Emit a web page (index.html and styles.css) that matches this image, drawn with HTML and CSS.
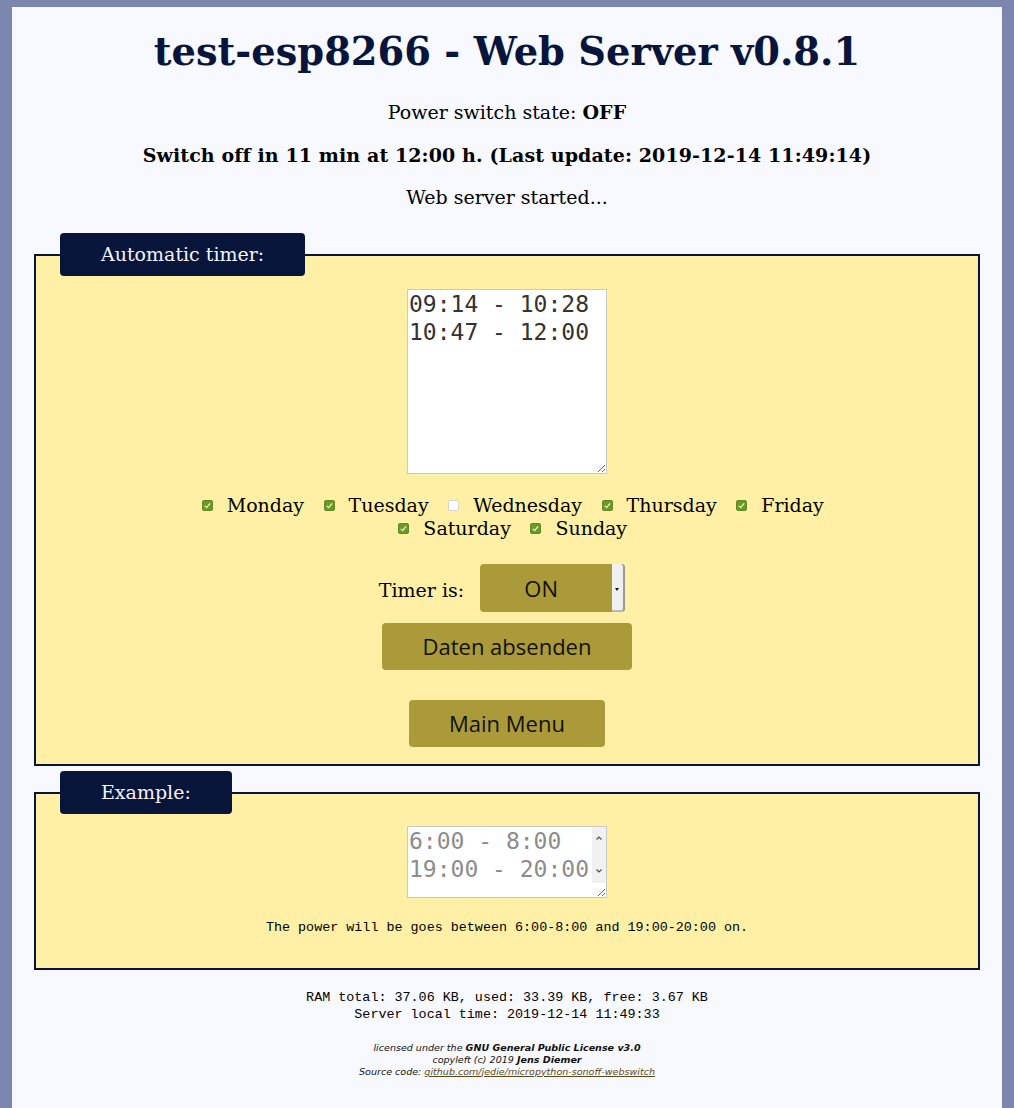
FILE: index.html
```html
<!DOCTYPE html>
<html lang="en">
<head>
<meta charset="utf-8">
<title>test-esp8266 - Web Server v0.8.1</title>
<link rel="stylesheet" href="styles.css">
</head>
<body>
<div class="page">
  <h1 class="title">test-esp8266 - Web Server v0.8.1</h1>
  <p class="status first">Power switch state: <strong>OFF</strong></p>
  <p class="status"><strong>Switch off in 11 min at 12:00 h. (Last update: 2019-12-14 11:49:14)</strong></p>
  <p class="status">Web server started...</p>

  <fieldset class="box">
    <legend class="box-legend">Automatic timer:</legend>
    <div class="box-body">
      <textarea class="times times-main" spellcheck="false">09:14 - 10:28
10:47 - 12:00</textarea>
      <div class="days">
        <div class="day-row">
          <label class="day"><input class="check" type="checkbox" checked>Monday</label>
          <label class="day"><input class="check" type="checkbox" checked>Tuesday</label>
          <label class="day"><input class="check" type="checkbox">Wednesday</label>
          <label class="day"><input class="check" type="checkbox" checked>Thursday</label>
          <label class="day"><input class="check" type="checkbox" checked>Friday</label>
        </div>
        <div class="day-row">
          <label class="day"><input class="check" type="checkbox" checked>Saturday</label>
          <label class="day"><input class="check" type="checkbox" checked>Sunday</label>
        </div>
      </div>
      <div class="timer-row">
        <span class="timer-label">Timer is:</span>
        <span class="select-wrap">
          <select class="select">
            <option>ON</option>
            <option>OFF</option>
          </select>
          <span class="select-arrow"></span>
        </span>
      </div>
      <button class="btn btn-submit" type="button">Daten absenden</button>
      <button class="btn btn-menu" type="button">Main Menu</button>
    </div>
  </fieldset>

  <fieldset class="box box-example">
    <legend class="box-legend">Example:</legend>
    <div class="box-body">
      <div class="ta-wrap">
        <textarea class="times times-example" readonly spellcheck="false">6:00 - 8:00
19:00 - 20:00</textarea>
        <span class="fake-scroll">
          <svg class="scroll-arrow" width="14" height="10" viewBox="0 0 14 10"><path d="M4.5 6.5 L7 4 L9.5 6.5" fill="none" stroke="#505050" stroke-width="1.2"/></svg>
          <svg class="scroll-arrow" width="14" height="10" viewBox="0 0 14 10"><path d="M4.5 3.5 L7 6 L9.5 3.5" fill="none" stroke="#505050" stroke-width="1.2"/></svg>
        </span>
      </div>
      <p class="example-text">The power will be goes between 6:00-8:00 and 19:00-20:00 on.</p>
    </div>
  </fieldset>

  <div class="footer">
    <div class="mem">RAM total: 37.06 KB, used: 33.39 KB, free: 3.67 KB<br>Server local time: 2019-12-14 11:49:33</div>
    <div class="license">licensed under the <strong>GNU General Public License v3.0</strong><br>copyleft (c) 2019 <strong>Jens Diemer</strong><br>Source code: <a class="src-link" href="#">github.com/jedie/micropython-sonoff-webswitch</a></div>
  </div>
</div>
</body>
</html>
```

FILE: styles.css
```css
html, body {
  margin: 0;
}

body {
  background: #7a86ae;
  padding: 7px 12px 0;
  font-family: "DejaVu Serif", serif;
  font-size: 19px;
  color: #000;
}

.page {
  background: #f8f9ff;
  min-height: 1140px;
  padding: 24px 22px 20px;
}

.title {
  margin: 0;
  font-size: 38.4px;
  line-height: 42px;
  font-weight: bold;
  text-align: center;
  color: #061539;
}

.status {
  margin: 18.5px 0 0;
  line-height: 24px;
  text-align: center;
}

.status.first {
  margin-top: 27px;
}

.status strong {
  letter-spacing: 0.1px;
}

.box {
  margin: 24px 0 0;
  border: 2px solid #061539;
  background: #fff0a5;
  padding: 13px 24px 17px;
  min-width: 0;
}

.box-example {
  margin-top: 5px;
  padding-top: 12px;
  padding-bottom: 32px;
}

.box-legend {
  background: #061539;
  color: #f4f4ff;
  border-radius: 4px;
  padding: 10px 41px 11px;
  line-height: 22px;
  font-size: 19px;
}

.box-body {
  display: flex;
  flex-direction: column;
  align-items: center;
}

.times {
  display: block;
  box-sizing: border-box;
  width: 200px;
  margin: 0;
  border: 1px solid #c9c9c9;
  background: #fff;
  padding: 0 1px 1px;
  font-family: "DejaVu Sans Mono", monospace;
  font-size: 23px;
  line-height: 28px;
  color: #333;
  resize: both;
  outline: none;
}

.times-main {
  height: 185px;
  overflow: auto;
}

.ta-wrap {
  position: relative;
  width: 200px;
  height: 72px;
}

.times-example {
  height: 72px;
  color: #8c8c8c;
  overflow: hidden;
  white-space: pre;
}

.fake-scroll {
  position: absolute;
  top: 1px;
  right: 1px;
  width: 14px;
  height: 56px;
  background: #f1f1f1;
  display: flex;
  flex-direction: column;
  justify-content: space-between;
  padding: 6px 0 7px;
  box-sizing: border-box;
}

.scroll-arrow {
  display: block;
}

.days {
  margin-top: 20px;
  display: flex;
  flex-direction: column;
  align-items: center;
}

.day-row {
  display: flex;
  justify-content: center;
  line-height: 23px;
}

.day {
  display: inline-flex;
  align-items: center;
  margin: 0 4px 0 15.5px;
}

.check {
  appearance: none;
  -webkit-appearance: none;
  box-sizing: border-box;
  width: 11px;
  height: 11px;
  margin: 0 14px 0 0;
  border: 1px solid #d3d3d3;
  border-radius: 2px;
  background: #fff;
  position: relative;
}

.check:checked {
  background: #6d9a26;
  border-color: #5f8a1f;
}

.check:checked::after {
  content: "";
  position: absolute;
  left: 3px;
  top: 1px;
  width: 2px;
  height: 5px;
  border: solid #fff;
  border-width: 0 1.5px 1.5px 0;
  transform: rotate(40deg);
}

.timer-row {
  margin-top: 24px;
  display: flex;
  align-items: center;
}

.timer-label {
  margin-right: 16px;
  padding-top: 3px;
}

.select-wrap {
  position: relative;
  display: inline-block;
  width: 145px;
  height: 48px;
  margin-right: 10px;
}

.select {
  appearance: none;
  -webkit-appearance: none;
  display: block;
  width: 145px;
  height: 48px;
  margin: 0;
  border: none;
  border-radius: 4px;
  background: #ab9a3a;
  padding: 0 23px 0 0;
  font-family: "Open Sans", sans-serif;
  font-size: 22px;
  color: #111;
  text-align: center;
  text-align-last: center;
}

.select-arrow {
  position: absolute;
  right: 0;
  top: 0;
  width: 11px;
  height: 46px;
  background: #f0f0f0;
  border-right: 2px solid #9a9a9a;
  border-bottom: 2px solid #b8b8b8;
  border-radius: 0 4px 4px 0;
}

.select-arrow::after {
  content: "";
  position: absolute;
  left: 3px;
  top: 24px;
  border-left: 2.5px solid transparent;
  border-right: 2.5px solid transparent;
  border-top: 3px solid #111;
}

.btn {
  display: block;
  height: 47px;
  margin: 0;
  padding: 0 40px 2px;
  border: none;
  border-radius: 4px;
  background: #ab9a3a;
  font-family: "Open Sans", sans-serif;
  font-size: 22px;
  color: #111;
}

.btn-submit {
  margin-top: 11px;
  padding: 0 41px 2px;
}

.btn-menu {
  margin-top: 30px;
}

.example-text {
  margin: 22px 0 0;
  font-family: "Liberation Mono", monospace;
  font-size: 13.4px;
  line-height: 16px;
  text-align: center;
}

.footer {
  text-align: center;
}

.mem {
  margin-top: 19px;
  font-family: "Liberation Mono", monospace;
  font-size: 13.4px;
  line-height: 17px;
}

.license {
  margin-top: 18.5px;
  font-family: "DejaVu Sans", sans-serif;
  font-style: italic;
  font-size: 9.55px;
  line-height: 12px;
  color: #111;
}

.src-link {
  color: #5c4a16;
}
```
